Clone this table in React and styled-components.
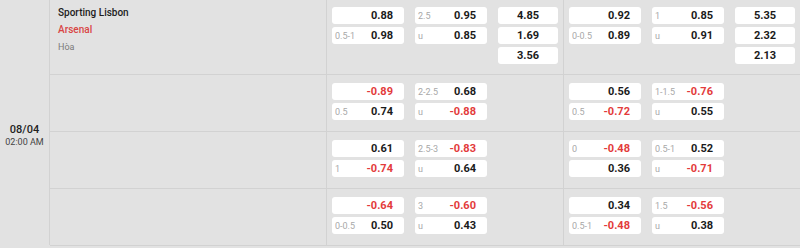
import React from 'react';
import styled, { createGlobalStyle } from 'styled-components';

const GlobalStyle = createGlobalStyle`
  body {
    margin: 0;
    background: #e2e2e2;
    font-family: Roboto, 'Liberation Sans', sans-serif;
  }
`;

const Page = styled.div`
  display: flex;
  width: 800px;
  height: 248px;
  background: #e2e2e2;
  overflow: hidden;
`;

const DateCol = styled.div`
  width: 50px;
  flex-shrink: 0;
  border-right: 1px solid #d2d2d2;
  display: flex;
  flex-direction: column;
  align-items: center;
  justify-content: center;
  padding-top: 27px;
  height: 245px;
  box-sizing: border-box;
`;

const DateDay = styled.div`
  font-size: 11px;
  font-weight: 500;
  color: #222;
  line-height: 13px;
`;

const DateTime = styled.div`
  font-size: 9px;
  color: #444;
  line-height: 13px;
`;

const Table = styled.div`
  flex: 1;
  display: flex;
  flex-direction: column;
`;

const Row = styled.div`
  display: grid;
  grid-template-columns: 277px 237px 1fr;
  border-bottom: 1px solid #d2d2d2;
  height: ${(p) => (p.$first ? 75 : 57)}px;
  box-sizing: border-box;
`;

const TeamCell = styled.div`
  border-right: 1px solid #d2d2d2;
  padding: 4px 0 0 8px;
  display: flex;
  flex-direction: column;
`;

const Team = styled.div`
  font-size: 10px;
  font-weight: 500;
  line-height: 17px;
  color: ${(p) => (p.$away ? '#d94545' : '#1c1c1c')};
`;

const Draw = styled.div`
  font-size: 9px;
  line-height: 17px;
  margin-top: 1px;
  color: #7a7a7a;
`;

const Block = styled.div`
  display: grid;
  grid-template-columns: 72px 72px 60px;
  column-gap: 11px;
  align-items: start;
  padding: ${(p) => (p.$first ? 7 : 8)}px 0 0 5px;
  border-right: ${(p) => (p.$last ? 'none' : '1px solid #d2d2d2')};
`;

const Stack = styled.div`
  display: flex;
  flex-direction: column;
  gap: 3px;
`;

const Box = styled.div`
  height: 17px;
  background: #fff;
  border-radius: 3px;
  display: flex;
  align-items: center;
  justify-content: ${(p) => (p.$center ? 'center' : 'space-between')};
  padding: ${(p) => (p.$center ? '0' : '0 11px 0 3px')};
  box-sizing: border-box;
`;

const Label = styled.span`
  font-size: 9px;
  color: #a8a8a8;
`;

const Value = styled.span`
  font-size: 11px;
  font-weight: 700;
  color: ${(p) => (p.$neg ? '#e33b3b' : '#1a1a1a')};
`;

const rows = [
  [
    [
      [{ v: '0.88' }, { l: '0.5-1', v: '0.98' }],
      [{ l: '2.5', v: '0.95' }, { l: 'u', v: '0.85' }],
      ['4.85', '1.69', '3.56'],
    ],
    [
      [{ v: '0.92' }, { l: '0-0.5', v: '0.89' }],
      [{ l: '1', v: '0.85' }, { l: 'u', v: '0.91' }],
      ['5.35', '2.32', '2.13'],
    ],
  ],
  [
    [
      [{ v: '-0.89' }, { l: '0.5', v: '0.74' }],
      [{ l: '2-2.5', v: '0.68' }, { l: 'u', v: '-0.88' }],
    ],
    [
      [{ v: '0.56' }, { l: '0.5', v: '-0.72' }],
      [{ l: '1-1.5', v: '-0.76' }, { l: 'u', v: '0.55' }],
    ],
  ],
  [
    [
      [{ v: '0.61' }, { l: '1', v: '-0.74' }],
      [{ l: '2.5-3', v: '-0.83' }, { l: 'u', v: '0.64' }],
    ],
    [
      [{ l: '0', v: '-0.48' }, { v: '0.36' }],
      [{ l: '0.5-1', v: '0.52' }, { l: 'u', v: '-0.71' }],
    ],
  ],
  [
    [
      [{ v: '-0.64' }, { l: '0-0.5', v: '0.50' }],
      [{ l: '3', v: '-0.60' }, { l: 'u', v: '0.43' }],
    ],
    [
      [{ v: '0.34' }, { l: '0.5-1', v: '-0.48' }],
      [{ l: '1.5', v: '-0.56' }, { l: 'u', v: '0.38' }],
    ],
  ],
];

const OddsBox = ({ l, v }) => (
  <Box>
    <Label>{l || ''}</Label>
    <Value $neg={v.startsWith('-')}>{v}</Value>
  </Box>
);

const OddsBlock = ({ cols, first, last }) => (
  <Block $first={first} $last={last}>
    <Stack>
      {cols[0].map((o, i) => (
        <OddsBox key={i} {...o} />
      ))}
    </Stack>
    <Stack>
      {cols[1].map((o, i) => (
        <OddsBox key={i} {...o} />
      ))}
    </Stack>
    {cols[2] && (
      <Stack>
        {cols[2].map((v, i) => (
          <Box key={i} $center>
            <Value>{v}</Value>
          </Box>
        ))}
      </Stack>
    )}
  </Block>
);

export default function App() {
  return (
    <>
      <GlobalStyle />
      <Page>
        <DateCol>
          <DateDay>08/04</DateDay>
          <DateTime>02:00 AM</DateTime>
        </DateCol>
        <Table>
          {rows.map((r, i) => (
            <Row key={i} $first={i === 0}>
              <TeamCell>
                {i === 0 && (
                  <>
                    <Team>Sporting Lisbon</Team>
                    <Team $away>Arsenal</Team>
                    <Draw>Hòa</Draw>
                  </>
                )}
              </TeamCell>
              <OddsBlock cols={r[0]} first={i === 0} />
              <OddsBlock cols={r[1]} first={i === 0} last />
            </Row>
          ))}
        </Table>
      </Page>
    </>
  );
}
